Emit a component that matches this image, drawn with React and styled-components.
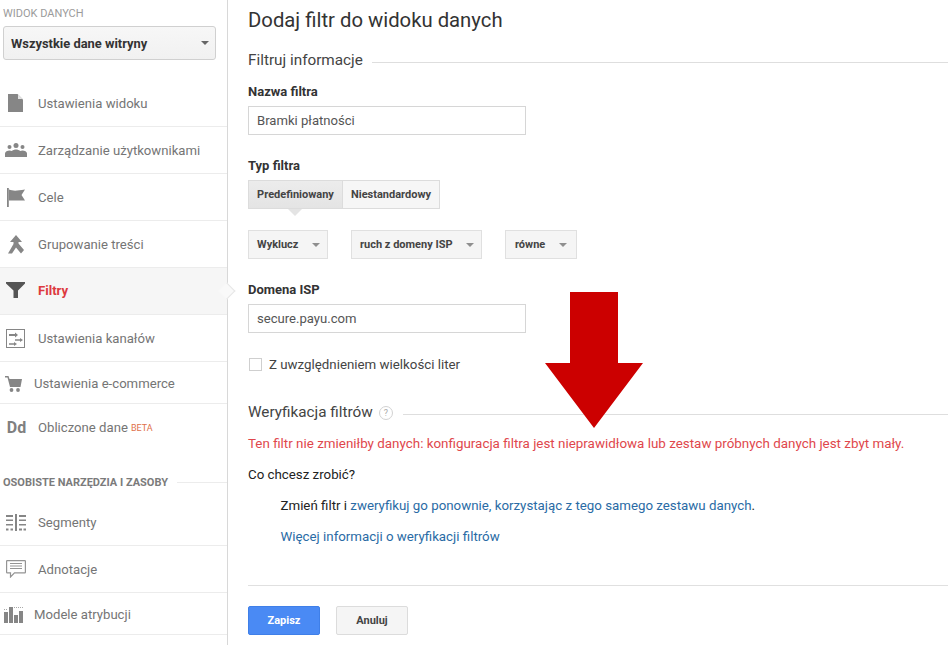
import React from "react";
import styled, { createGlobalStyle } from "styled-components";

const Global = createGlobalStyle`
  html, body { margin: 0; padding: 0; background: #fff; overflow: hidden; }
  body { font-family: Roboto, "Liberation Sans", sans-serif; }
  #root { width: 948px; height: 645px; overflow: hidden; }
`;

const Page = styled.div`
  position: relative;
  display: flex;
  width: 948px;
  height: 645px;
  overflow: hidden;
`;

const Sidebar = styled.aside`
  flex: 0 0 227px;
  width: 227px;
  height: 645px;
  box-sizing: content-box;
  border-right: 1px solid #d8d8d8;
`;

const ViewLabel = styled.div`
  height: 14px;
  margin: 7px 0 5px 3px;
  font-size: 11px;
  line-height: 14px;
  color: #9b9b9b;
`;

const ViewSelect = styled.div`
  display: flex;
  align-items: center;
  justify-content: space-between;
  box-sizing: border-box;
  width: 213px;
  height: 34px;
  margin-left: 3px;
  padding: 0 6px 0 7px;
  border: 1px solid #d0d0d0;
  border-radius: 3px;
  background: linear-gradient(#f7f7f7, #f1f1f1);
  font-size: 12.9px;
  font-weight: 700;
  color: #333;
`;

const Caret = styled.span`
  display: inline-block;
  width: 0;
  height: 0;
  border-left: 4px solid transparent;
  border-right: 4px solid transparent;
  border-top: 4px solid ${(p) => p.$color || "#8f8f8f"};
`;

const Menu = styled.nav`
  margin-top: ${(p) => p.$top}px;
`;

const Row = styled.div`
  position: relative;
  display: flex;
  align-items: center;
  box-sizing: border-box;
  height: ${(p) => p.$h || 47}px;
  padding: ${(p) => (p.$h ? "2px 0 0" : p.$active ? "0 0 2px" : "0")};
  border-bottom: ${(p) => (p.$last ? "none" : "1px solid #ececec")};
  background: ${(p) => (p.$active ? "#f6f6f6" : "#fff")};
  font-size: 13.15px;
  font-weight: ${(p) => (p.$active ? 700 : 400)};
  color: ${(p) => (p.$active ? "#dd3a3f" : "#757575")};
`;

const IconSlot = styled.span`
  display: flex;
  align-items: center;
  justify-content: center;
  box-sizing: border-box;
  flex: 0 0 ${(p) => p.$w || 38}px;
  width: ${(p) => p.$w || 38}px;
  height: 30px;
  padding-right: ${(p) => (p.$w ? 8 : 7)}px;
  color: ${(p) => (p.$active ? "#555" : "#868686")};
`;

const ActiveNotch = styled.span`
  position: absolute;
  right: -6px;
  top: 17px;
  width: 12px;
  height: 12px;
  box-sizing: border-box;
  transform: rotate(45deg);
  background: #f9f9f9;
  border-top: 1px solid #e6e6e6;
  border-right: 1px solid #e6e6e6;
`;

const DdGlyph = styled.span`
  margin-left: 2px;
  font-size: 16px;
  font-weight: 700;
  color: #808080;
`;

const Beta = styled.span`
  margin-left: 3px;
  font-size: 9px;
  color: #e0714a;
`;

const ToolsHeading = styled.div`
  display: flex;
  align-items: center;
  gap: 9px;
  height: 14px;
  margin: 24px 0 0 3px;
  font-size: 11px;
  font-weight: 700;
  color: #7b7b7b;
  &::after {
    content: "";
    flex: 1;
    height: 1px;
    background: #ececec;
  }
`;

const Main = styled.main`
  flex: 1;
  min-width: 0;
  padding-left: 20px;
`;

const Title = styled.h1`
  height: 24px;
  margin: 8px 0 0;
  font-size: 20.3px;
  line-height: 24px;
  font-weight: 400;
  color: #333;
`;

const SectionHead = styled.div`
  display: flex;
  align-items: center;
  height: 20px;
  margin-top: ${(p) => p.$top}px;
  font-size: 15.3px;
  color: #444;
  &::after {
    content: "";
    flex: 1;
    height: 1px;
    margin: 5px 0 0 ${(p) => p.$gap || 9}px;
    background: #dedede;
  }
`;

const FieldLabel = styled.div`
  height: 16px;
  margin-top: ${(p) => p.$top}px;
  font-size: 13px;
  line-height: 16px;
  font-weight: 700;
  color: #333;
`;

const TextBox = styled.div`
  display: flex;
  align-items: center;
  box-sizing: border-box;
  width: 278px;
  height: 29px;
  margin-top: 6px;
  padding-left: 8px;
  border: 1px solid #d6d6d6;
  font-size: 13.1px;
  color: #555;
`;

const Segmented = styled.div`
  display: flex;
  margin-top: 6px;
`;

const Segment = styled.div`
  position: relative;
  display: flex;
  align-items: center;
  justify-content: center;
  box-sizing: border-box;
  width: ${(p) => p.$w}px;
  height: 29px;
  border: 1px solid #dcdcdc;
  border-left-width: ${(p) => (p.$active ? 1 : 0)}px;
  background: ${(p) => (p.$active ? "linear-gradient(#ececec, #e4e4e4)" : "#f6f6f6")};
  font-size: 11px;
  font-weight: 700;
  color: #444;
  ${(p) =>
    p.$active &&
    `&::after {
      content: "";
      position: absolute;
      left: 39px;
      bottom: -8px;
      border-left: 7px solid transparent;
      border-right: 7px solid transparent;
      border-top: 7px solid #e4e4e4;
    }`}
`;

const SelectRow = styled.div`
  display: flex;
  gap: 23px;
  margin-top: 21px;
`;

const DropButton = styled.div`
  display: flex;
  align-items: center;
  justify-content: space-between;
  box-sizing: border-box;
  width: ${(p) => p.$w}px;
  height: 29px;
  padding: ${(p) => p.$pad || "0 7px 0 8px"};
  border: 1px solid #e0e0e0;
  background: #f5f5f5;
  font-size: 11px;
  font-weight: 700;
  color: #444;
`;

const CheckRow = styled.label`
  display: flex;
  align-items: center;
  gap: 7px;
  height: 16px;
  margin: 23px 0 0 1px;
  font-size: 13.3px;
  color: #444;
`;

const CheckBox = styled.span`
  box-sizing: border-box;
  width: 13px;
  height: 13px;
  border: 1px solid #cfcfcf;
`;

const Help = styled.span`
  display: inline-flex;
  align-items: center;
  justify-content: center;
  box-sizing: border-box;
  width: 14px;
  height: 14px;
  margin: 2px 0 0 6px;
  border: 1px solid #d2d2d2;
  border-radius: 50%;
  font-size: 9px;
  color: #aaa;
`;

const Para = styled.p`
  height: 16px;
  margin: ${(p) => p.$top}px 0 0 ${(p) => p.$left || 0}px;
  font-size: ${(p) => p.$size || 13.3}px;
  line-height: 16px;
  white-space: nowrap;
  color: ${(p) => p.$color || "#222"};
`;

const Link = styled.a`
  color: #2a6ba5;
`;

const Divider = styled.hr`
  height: 1px;
  margin: 40px 0 0;
  border: 0;
  background: #e0e0e0;
`;

const Actions = styled.div`
  display: flex;
  gap: 16px;
  margin-top: 20px;
`;

const Button = styled.div`
  display: flex;
  align-items: center;
  justify-content: center;
  box-sizing: border-box;
  width: 72px;
  height: 29px;
  border: 1px solid ${(p) => (p.$primary ? "#3f7fe8" : "#dcdcdc")};
  border-radius: 2px;
  background: ${(p) => (p.$primary ? "#4a8af4" : "#f5f5f5")};
  font-size: 11px;
  font-weight: 700;
  color: ${(p) => (p.$primary ? "#fff" : "#444")};
`;

const BigArrow = styled.svg`
  position: absolute;
  left: 545px;
  top: 292px;
  width: 98px;
  height: 136px;
`;

const DocIcon = () => (
  <svg width="15" height="18" viewBox="0 0 15 18">
    <path d="M0 0h9.500L15 5.500V18H0z" fill="currentColor" />
    <path d="M10 .5 14.500 5H10z" fill="#e4e4e4" />
  </svg>
);
const UsersIcon = () => (
  <svg width="22" height="14" viewBox="0 0 22 14" fill="currentColor">
    <circle cx="11" cy="2.500" r="2.500" />
    <circle cx="4.500" cy="4" r="2" />
    <circle cx="17.500" cy="4" r="2" />
    <path d="M0 14v-3.500C0 8.500 2.500 7.500 4.500 7.500c1 0 1.800.2 2.400.5C8 7 9.500 6.500 11 6.500s3 .5 4.100 1.500c.6-.3 1.400-.5 2.400-.5 2 0 4.500 1 4.500 3V14z" />
  </svg>
);
const FlagIcon = () => (
  <svg width="18" height="19" viewBox="0 0 18 19" fill="currentColor">
    <rect x="0" y="0" width="1.800" height="19" />
    <path d="M2 1.500c4 1.500 7 1.500 16 0l-3.500 5.500 3.500 5.500H2z" />
  </svg>
);
const GroupIcon = () => (
  <svg width="16" height="19" viewBox="0 0 16 19" fill="currentColor">
    <path d="M8 0l6 7h-3.500v1.500l5.500 6.500-3 3.500-5-6-4 6H0l5.500-9.500V7H2z" />
  </svg>
);
const FunnelIcon = () => (
  <svg width="19" height="16" viewBox="0 0 19 16" fill="currentColor">
    <path d="M0 0h19v1.500L12 8.500V16H7.500V8.500L0 1.500z" />
  </svg>
);
const ChannelIcon = () => (
  <svg width="19" height="19" viewBox="0 0 19 19" fill="none" stroke="currentColor">
    <rect x=".5" y=".5" width="18" height="18" />
    <path d="M3 6h6" strokeWidth="2" />
    <path d="M9 3.500 12 6 9 8.500z" fill="currentColor" stroke="none" />
    <path d="M9 11h5" strokeWidth="1.500" />
    <path d="M14 9l3 2-3 2z" fill="currentColor" stroke="none" />
    <path d="M3 15h5" strokeWidth="1.500" />
    <path d="M8 13l3 2-3 2z" fill="currentColor" stroke="none" />
  </svg>
);
const CartIcon = () => (
  <svg width="17" height="16" viewBox="0 0 17 16" fill="currentColor">
    <path d="M0 0h3.500l1 3H17l-1.500 8H5L2.500 1.500H0z" />
    <circle cx="6.500" cy="14" r="1.900" />
    <circle cx="13" cy="14" r="1.900" />
  </svg>
);
const SegmentsIcon = () => (
  <svg width="20" height="17" viewBox="0 0 20 17" fill="currentColor">
    <rect x="9" y="0" width="2" height="17" />
    <path d="M0 1h7v2H0zM0 5.500h7V7H0zM0 10h7v1.500H0zM0 14.500h2.500v2H0zM4.500 14.500H7v2H4.500zM13 1h7v2h-7zM13 5.500h7V7h-7zM13 10h7v1.500h-7zM13 14.500h3v2h-3zM17.500 14.500H20v2h-2.500z" />
  </svg>
);
const NoteIcon = () => (
  <svg width="20" height="18" viewBox="0 0 20 18" fill="none" stroke="#949494" strokeWidth="1.200">
    <path d="M1.200.6h17.600a.6.6 0 0 1 .6.6v11a.6.6 0 0 1-.6.6H8.500L4.500 17v-4.200H1.200a.6.6 0 0 1-.6-.6v-11a.6.6 0 0 1 .6-.6z" />
    <path d="M4 3.500h12M4 6h12M4 8.500h12" />
  </svg>
);
const BarsIcon = () => (
  <svg width="19" height="17" viewBox="0 0 19 17">
    <g fill="currentColor">
      <rect x="0" y="6" width="4" height="11" />
      <rect x="5" y="1" width="4" height="16" />
      <rect x="10" y="9" width="4" height="8" />
      <rect x="15" y="5" width="4" height="12" />
    </g>
    <path d="M0 3.500h4M10 1.500h9" stroke="currentColor" strokeDasharray="1 1" opacity=".7" />
  </svg>
);

export default function App() {
  return (
    <Page>
      <Global />
      <Sidebar>
        <ViewLabel>WIDOK DANYCH</ViewLabel>
        <ViewSelect>
          Wszystkie dane witryny
          <Caret $color="#666" />
        </ViewSelect>
        <Menu $top={20}>
          <Row><IconSlot><DocIcon /></IconSlot>Ustawienia widoku</Row>
          <Row><IconSlot><UsersIcon /></IconSlot>Zarządzanie użytkownikami</Row>
          <Row><IconSlot><FlagIcon /></IconSlot>Cele</Row>
          <Row><IconSlot><GroupIcon /></IconSlot>Grupowanie treści</Row>
          <Row $active>
            <IconSlot $active><FunnelIcon /></IconSlot>Filtry
            <ActiveNotch />
          </Row>
          <Row><IconSlot><ChannelIcon /></IconSlot>Ustawienia kanałów</Row>
          <Row $h={42}><IconSlot $w={34}><CartIcon /></IconSlot>Ustawienia e-commerce</Row>
          <Row $last><IconSlot><DdGlyph>Dd</DdGlyph></IconSlot>Obliczone dane<Beta>BETA</Beta></Row>
        </Menu>
        <ToolsHeading>OSOBISTE NARZĘDZIA I ZASOBY</ToolsHeading>
        <Menu $top={10}>
          <Row><IconSlot><SegmentsIcon /></IconSlot>Segmenty</Row>
          <Row><IconSlot><NoteIcon /></IconSlot>Adnotacje</Row>
          <Row $h={42}><IconSlot $w={34}><BarsIcon /></IconSlot>Modele atrybucji</Row>
        </Menu>
      </Sidebar>
      <Main>
        <Title>Dodaj filtr do widoku danych</Title>
        <SectionHead $top={18}>Filtruj informacje</SectionHead>
        <FieldLabel $top={14}>Nazwa filtra</FieldLabel>
        <TextBox>Bramki płatności</TextBox>
        <FieldLabel $top={23}>Typ filtra</FieldLabel>
        <Segmented>
          <Segment $active $w={95}>Predefiniowany</Segment>
          <Segment $w={97}>Niestandardowy</Segment>
        </Segmented>
        <SelectRow>
          <DropButton $w={80}>Wyklucz<Caret /></DropButton>
          <DropButton $w={131}>ruch z domeny ISP<Caret /></DropButton>
          <DropButton $w={72} $pad="0 9px">równe<Caret /></DropButton>
        </SelectRow>
        <FieldLabel $top={23}>Domena ISP</FieldLabel>
        <TextBox>secure.payu.com</TextBox>
        <CheckRow><CheckBox />Z uwzględnieniem wielkości liter</CheckRow>
        <SectionHead $top={30} $gap={10}>Weryfikacja filtrów<Help>?</Help></SectionHead>
        <Para $top={14} $size={13.4} $color="#e0474c">Ten filtr nie zmieniłby danych: konfiguracja filtra jest nieprawidłowa lub zestaw próbnych danych jest zbyt mały.</Para>
        <Para $top={15}>Co chcesz zrobić?</Para>
        <Para $top={15} $left={32.5}>Zmień filtr i <Link>zweryfikuj go ponownie, korzystając z tego samego zestawu danych</Link>.</Para>
        <Para $top={15} $left={32.5}><Link>Więcej informacji o weryfikacji filtrów</Link></Para>
        <Divider />
        <Actions>
          <Button $primary>Zapisz</Button>
          <Button>Anuluj</Button>
        </Actions>
      </Main>
      <BigArrow viewBox="0 0 98 136">
        <path d="M25 0h48v71h25L49 136 0 71h25z" fill="#cc0000" />
      </BigArrow>
    </Page>
  );
}
